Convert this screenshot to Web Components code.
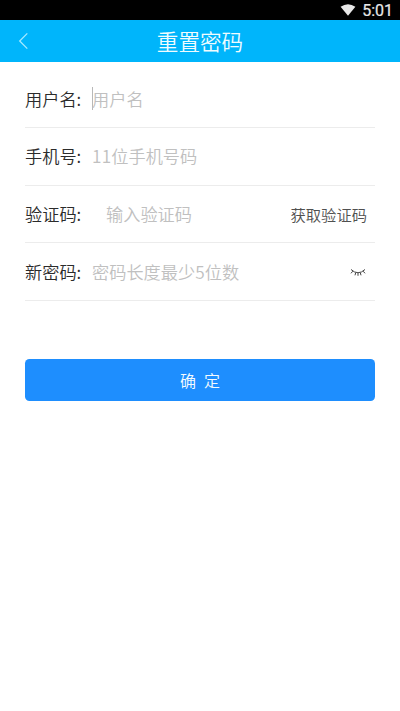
<!DOCTYPE html>
<html lang="zh-CN">
<head>
<meta charset="utf-8">
<title>重置密码</title>
<style>
html, body { margin: 0; height: 100%; background: #fff; overflow: hidden; }
body { font-family: "Noto Sans CJK SC DemiLight", "Noto Sans CJK SC", sans-serif; font-weight: 350; }
</style>
</head>
<body>
<reset-page></reset-page>
<script>
const define = (name, html) => customElements.define(name, class extends HTMLElement {
  constructor() {
    super();
    this.attachShadow({ mode: 'open' }).innerHTML = html;
  }
});

define('status-bar', `
<style>
:host { display: flex; box-sizing: border-box; height: 20px; background: #000; color: #e8e8e8;
  align-items: center; justify-content: flex-end; gap: 6px; padding-right: 7px;
  font: 400 16px/20px Roboto, sans-serif; }
svg { display: block; margin-top: -1px; }
span { padding-top: 2px; -webkit-text-stroke: .2px #e8e8e8; }
</style>
<svg width="16" height="12" viewBox="0 0 16 12"><path d="M.6 2.8Q8-2.4 15.4 2.8L8 11.8Z" fill="#e8e8e8"/></svg>
<span><slot></slot></span>`);

define('title-bar', `
<style>
:host { display: grid; grid-template-columns: 60px 1fr 60px; align-items: center; height: 42px;
  background: #00b5fb; color: #f0fcff; font-size: 21.6px; line-height: 42px; text-align: center; }
svg { display: block; margin-left: 18px; }
</style>
<svg width="11" height="18" viewBox="0 0 11 18" fill="none" stroke="#a5eaff" stroke-width="1.3"><path d="M9.3 1.4L1.7 9L9.3 16.6"/></svg>
<span><slot></slot></span>`);

define('form-row', `
<style>
:host { display: flex; align-items: center; box-sizing: border-box; height: 57.75px;
  border-bottom: 1px solid #ececec; font-size: 17.2px; line-height: 26px; white-space: nowrap; }
:host(:first-of-type) .label, :host(:first-of-type) .hint { padding-top: 1px; }
.label { width: 67px; color: #2b2b2b; }
.hint { flex: 1; display: flex; align-items: center; color: #c0c0c0; font-weight: 300; }
</style>
<span class="label"><slot name="label"></slot></span>
<span class="hint"><slot></slot></span>
<slot name="action"></slot>`);

define('text-caret', `
<style>:host { display: block; width: 1px; height: 23px; margin: -1px -1px 0 0; background: #b8b8b8; }</style>`);

define('code-button', `
<style>:host { display: block; margin-right: 8px; padding-top: 1px; font-size: 15.3px; color: #505050; }</style><slot></slot>`);

define('eye-closed', `
<style>:host { display: block; margin: 2px 9px 0 0; } svg { display: block; }</style>
<svg width="16" height="9" viewBox="0 0 16 9" fill="none" stroke="#444" stroke-width="1"><path d="M1 1.5Q8 8 15 1.5M2.8 3.2L1 5.3M5.7 4.7L5 7.3M8 5V7.8M10.3 4.7L11 7.3M13.2 3.2L15 5.3"/></svg>`);

define('submit-button', `
<style>
:host { display: block; height: 42px; border-radius: 4.5px; background: #1e8efe; color: #f4fbff;
  font-size: 16px; line-height: 43px; text-align: center; word-spacing: 4.4px; }
</style><slot></slot>`);

define('reset-page', `
<style>
:host { display: block; }
main { padding: 8px 25px 0; }
submit-button { margin-top: 58px; }
.indent { padding-left: 14px; }
.digits { font-weight: 400; letter-spacing: .2px; }
</style>
<status-bar>5:01</status-bar>
<title-bar>重置密码</title-bar>
<main>
<form-row><span slot="label">用户名:</span><text-caret></text-caret>用户名</form-row>
<form-row><span slot="label">手机号:</span><span class="digits">11</span>位手机号码</form-row>
<form-row><span slot="label">验证码:</span><span class="indent">输入验证码</span><code-button slot="action">获取验证码</code-button></form-row>
<form-row><span slot="label">新密码:</span>密码长度最少<span class="digits">5</span>位数<eye-closed slot="action"></eye-closed></form-row>
<submit-button>确 定</submit-button>
</main>`);
</script>
</body>
</html>
